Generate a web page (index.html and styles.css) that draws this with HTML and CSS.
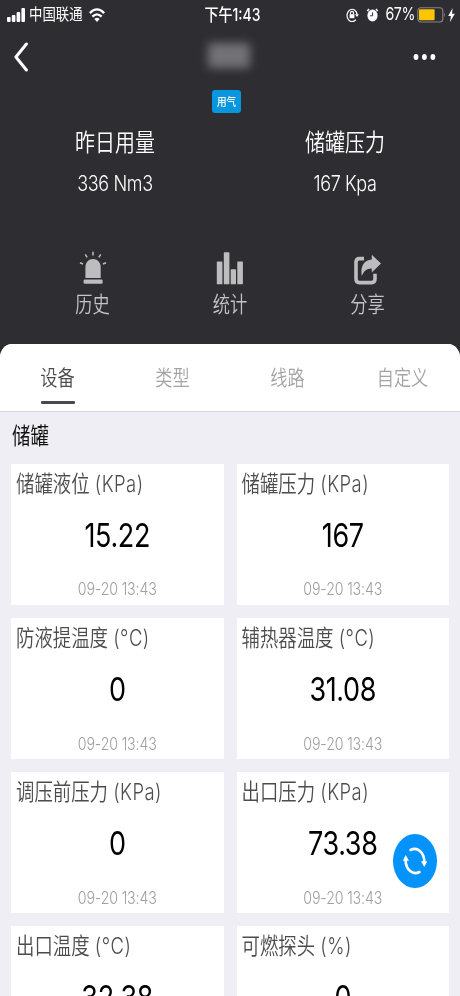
FILE: index.html
```html
<!DOCTYPE html>
<html lang="zh-CN">
<head>
<meta charset="utf-8">
<title>设备</title>
<link rel="stylesheet" href="styles.css">
</head>
<body>
<div class="screen">
  <header class="status">
    <div class="status-left">
      <svg class="signal" width="19" height="14" viewBox="0 0 19 14" fill="#fff"><rect x="0" y="9" width="3.6" height="5" rx="1"/><rect x="4.8" y="7" width="3.6" height="7" rx="1"/><rect x="9.6" y="4" width="3.6" height="10" rx="1"/><rect x="14.4" y="0" width="3.6" height="14" rx="1"/></svg>
      <span class="t carrier">中国联通</span>
      <svg class="wifi" width="16" height="14" viewBox="0 0 16 14" fill="none" stroke="#fff" stroke-width="2.4"><path d="M.8 5.1Q8-2.4 15.2 5.1"/><path d="M3.4 8.7Q8 4 12.6 8.7"/><path d="M5.4 10.9Q8 8.6 10.6 10.9L8 14Z" fill="#fff" stroke="none"/></svg>
    </div>
    <span class="t clock">下午1:43</span>
    <div class="status-right">
      <svg width="13" height="14" viewBox="0 0 13 14" fill="none" stroke="#fff" stroke-width="1.2"><path d="M9.8 11.6A5 6.2 0 1 1 11 6.5"/><path d="M8.9 6.3h4L11 9Z" fill="#fff" stroke="none"/><rect x="3.6" y="6.2" width="4.8" height="4" fill="#fff" stroke="none"/><path d="M4.5 6.3V5a1.5 1.7 0 0 1 3 0v1.3"/></svg>
      <svg class="alarm" width="13" height="14" viewBox="0 0 13 14"><ellipse cx="6.5" cy="7.4" rx="5.1" ry="6" fill="#fff"/><path d="M1.2 3 3.1 1M11.8 3 9.9 1" stroke="#fff" stroke-width="1.4"/><path d="M6.6 4.4v3.4H4.2" fill="none" stroke="#2e2d31" stroke-width="1"/></svg>
      <span class="t percent">67%</span>
      <svg width="29" height="16" viewBox="0 0 29 16"><rect x=".8" y=".8" width="25" height="14.2" rx="3" fill="none" stroke="#858488" stroke-width="1.1"/><rect x="2" y="2.3" width="15.6" height="11" rx="1" fill="#fdc500"/><path d="M27 5.3q1.8 2.6 0 5.2Z" fill="#858488"/></svg>
      <svg class="bolt" width="7" height="14" viewBox="0 0 7 14"><path d="M4.6 0 .2 8h2.7L2 14l4.8-8.3H4Z" fill="#fff"/></svg>
    </div>
  </header>

  <nav class="nav">
    <svg width="15" height="30" viewBox="0 0 15 30" fill="none" stroke="#fff" stroke-width="3" stroke-linecap="round" stroke-linejoin="round"><path d="M13.4 2 2.9 15 13.4 28"/></svg>
    <div class="masked-title"></div>
    <svg width="23" height="8" viewBox="0 0 23 8" fill="#fff"><ellipse cx="3" cy="4" rx="2.4" ry="2.9"/><ellipse cx="11.4" cy="4" rx="2.4" ry="2.9"/><ellipse cx="19.9" cy="4" rx="2.4" ry="2.9"/></svg>
  </nav>

  <div class="badge-row"><div class="badge"><span class="t">用气</span></div></div>

  <section class="stats">
    <div class="stat"><div class="stat-name"><span class="t">昨日用量</span></div><div class="stat-value"><span class="t">336 Nm3</span></div></div>
    <div class="stat"><div class="stat-name"><span class="t">储罐压力</span></div><div class="stat-value"><span class="t">167 Kpa</span></div></div>
  </section>

  <section class="actions">
    <div class="action">
      <svg width="28" height="34" viewBox="0 0 28 34" fill="#bdbdbf"><path d="M6.4 27V16.5C6.4 11 9.8 8 14 8s7.7 3 7.7 8.5V27Z"/><rect x="4.6" y="28.5" width="19" height="4.2" rx="1.2"/><path d="M14 .8v3.6M6.3 3.4l1.8 3M21.7 3.4l-1.8 3M1 11.8l3 1.2M27 11.8l-3 1.2" stroke="#bdbdbf" stroke-width="1.5"/></svg>
      <span class="t">历史</span>
    </div>
    <div class="action">
      <svg width="28" height="34" viewBox="0 0 28 34" fill="#bdbdbf"><rect x=".8" y="10.5" width="5.6" height="22.8" rx=".6"/><rect x="7.8" y="1.3" width="5.6" height="32" rx=".6"/><rect x="14.7" y="18.3" width="5.3" height="15" rx=".6"/><rect x="21.3" y="10.5" width="5.6" height="22.8" rx=".6"/></svg>
      <span class="t">统计</span>
    </div>
    <div class="action">
      <svg width="28" height="34" viewBox="0 0 28 34"><path d="M10 7.6H5.2Q2 7.6 2 11V28Q2 31.6 5.2 31.6H17.6Q21 31.6 21 28V22.8" fill="none" stroke="#bdbdbf" stroke-width="3.6"/><path d="M17.8 3.8 27 12.6 17.8 21.6V17.4C12.8 17.2 9.6 20 7.8 25 6.2 16 9.6 8.9 17.8 8.4Z" fill="#bdbdbf"/></svg>
      <span class="t">分享</span>
    </div>
  </section>

  <main class="panel">
    <div class="tabs">
      <div class="tab active"><span class="t">设备</span></div>
      <div class="tab"><span class="t">类型</span></div>
      <div class="tab"><span class="t">线路</span></div>
      <div class="tab"><span class="t">自定义</span></div>
    </div>
    <h2 class="group"><span class="t">储罐</span></h2>
    <div class="cards">
      <article class="card"><div class="name"><span class="t">储罐液位 <span class="unit">(KPa)</span></span></div><div class="value"><span class="t">15.22</span></div><div class="time"><span class="t">09-20 13:43</span></div></article>
      <article class="card"><div class="name"><span class="t">储罐压力 <span class="unit">(KPa)</span></span></div><div class="value"><span class="t">167</span></div><div class="time"><span class="t">09-20 13:43</span></div></article>
      <article class="card"><div class="name"><span class="t">防液提温度 <span class="unit">(°C)</span></span></div><div class="value"><span class="t">0</span></div><div class="time"><span class="t">09-20 13:43</span></div></article>
      <article class="card"><div class="name"><span class="t">辅热器温度 <span class="unit">(°C)</span></span></div><div class="value"><span class="t">31.08</span></div><div class="time"><span class="t">09-20 13:43</span></div></article>
      <article class="card"><div class="name"><span class="t">调压前压力 <span class="unit">(KPa)</span></span></div><div class="value"><span class="t">0</span></div><div class="time"><span class="t">09-20 13:43</span></div></article>
      <article class="card"><div class="name"><span class="t">出口压力 <span class="unit">(KPa)</span></span></div><div class="value"><span class="t">73.38</span></div><div class="time"><span class="t">09-20 13:43</span></div></article>
      <article class="card"><div class="name"><span class="t">出口温度 <span class="unit">(°C)</span></span></div><div class="value"><span class="t">32.38</span></div></article>
      <article class="card"><div class="name"><span class="t">可燃探头 <span class="unit">(%)</span></span></div><div class="value"><span class="t">0</span></div></article>
    </div>
  </main>

  <div class="refresh">
    <svg width="26" height="28" viewBox="0 0 26 28" fill="none" stroke="#fff" stroke-width="2.6" stroke-linecap="round"><path d="M8.6 3C15.2-.4 22.2 4.8 22.4 15"/><path d="M17.4 25C10.8 28.4 3.8 23.2 3.6 13"/><path d="M19 14.2h6.2L22.3 20ZM.8 13.8H7L3.7 8Z" fill="#fff" stroke="none"/></svg>
  </div>
</div>
</body>
</html>
```
FILE: styles.css
```css
* { box-sizing: border-box; }
html, body { margin: 0; height: 996px; overflow: hidden; }
body { font-family: Inter, "Noto Sans CJK SC", sans-serif; font-weight: 350; color: #fff; }
svg { display: block; flex: none; }

.screen { position: relative; width: 460px; height: 996px; overflow: hidden; background: #2e2d31; display: flex; flex-direction: column; }
.t { display: inline-block; white-space: nowrap; line-height: 1; transform: scaleY(1.22); }

.status { height: 29px; flex: none; display: grid; grid-template-columns: 1fr auto 1fr; align-items: center; padding: 0 5px 0 7px; font-weight: 400; }
.status-left, .status-right { display: flex; align-items: center; }
.status-right { justify-content: flex-end; }
.carrier { font-size: 13.4px; margin: 0 6px 0 3px; }
.clock { font-size: 14px; font-weight: 500; margin-left: 3px; }
.alarm { margin: 0 6px 0 7px; }
.percent { font-size: 14.2px; letter-spacing: -.4px; margin-right: 2px; font-weight: 400; }
.bolt { margin-left: 2px; }

.nav { height: 56px; flex: none; display: flex; align-items: center; justify-content: space-between; padding: 0 24px 0 13px; }
.masked-title { width: 42px; height: 25px; margin: -4px 0 0 16px; background: #737276; filter: blur(5px); }

.badge-row { height: 34px; flex: none; display: flex; justify-content: center; padding: 5px 7px 0 0; }
.badge { width: 29px; height: 23px; border-radius: 3px; background: #0896df; display: flex; align-items: center; justify-content: center; font-size: 9.6px; font-weight: 500; }

.stats { flex: none; height: 127px; display: flex; padding-top: 1px; }
.stat { flex: 1; text-align: center; }
.stat-name, .stat-value { display: flex; align-items: center; justify-content: center; }
.stat-name { height: 44px; font-size: 20px; }
.stat-value { height: 40px; font-size: 18px; letter-spacing: -.35px; }

.actions { height: 98px; flex: none; display: flex; justify-content: space-between; padding: 5px 24px 0; }
.action { width: 137px; display: flex; flex-direction: column; align-items: center; gap: 11px; color: #c5c5c7; font-size: 17.3px; }

.panel { flex: 1; border-radius: 12px 12px 0 0 / 14px 14px 0 0; background: #efeef4; overflow: hidden; }
.tabs { height: 68px; background: #fff; border-bottom: 1px solid #d5d5da; display: flex; }
.tab { flex: 1; height: 68px; display: flex; justify-content: center; align-items: center; color: #a3a3a3; font-size: 17.2px; }
.tab.active { color: #4a4a4a; position: relative; }
.tab.active::after { content: ""; position: absolute; bottom: 8px; left: 41px; width: 34px; height: 3px; border-radius: 1px; background: #4a4a4a; }
.group { margin: 0; height: 51.5px; padding: 0 0 4px 12px; display: flex; align-items: center; color: #111; font-size: 18.4px; font-weight: 400; }
.cards { display: grid; grid-template-columns: 1fr 1fr; grid-auto-rows: 141.2px; gap: 13px; padding: 0 11px; }
.card { background: #fff; }
.name { height: 41px; padding-left: 5px; display: flex; align-items: center; color: #4c4c4c; font-size: 18.4px; }
.unit { letter-spacing: .5px; }
.value { height: 61.5px; display: flex; align-items: center; justify-content: center; color: #000; font-size: 27px; font-weight: 380; letter-spacing: -.35px; }
.time { height: 47px; display: flex; align-items: center; justify-content: center; color: #a0a0a0; font-size: 14.2px; letter-spacing: -.15px; }

.refresh { position: absolute; left: 393px; top: 834px; width: 44px; height: 54px; border-radius: 50%; background: #0393fb; display: flex; align-items: center; justify-content: center; }
```
